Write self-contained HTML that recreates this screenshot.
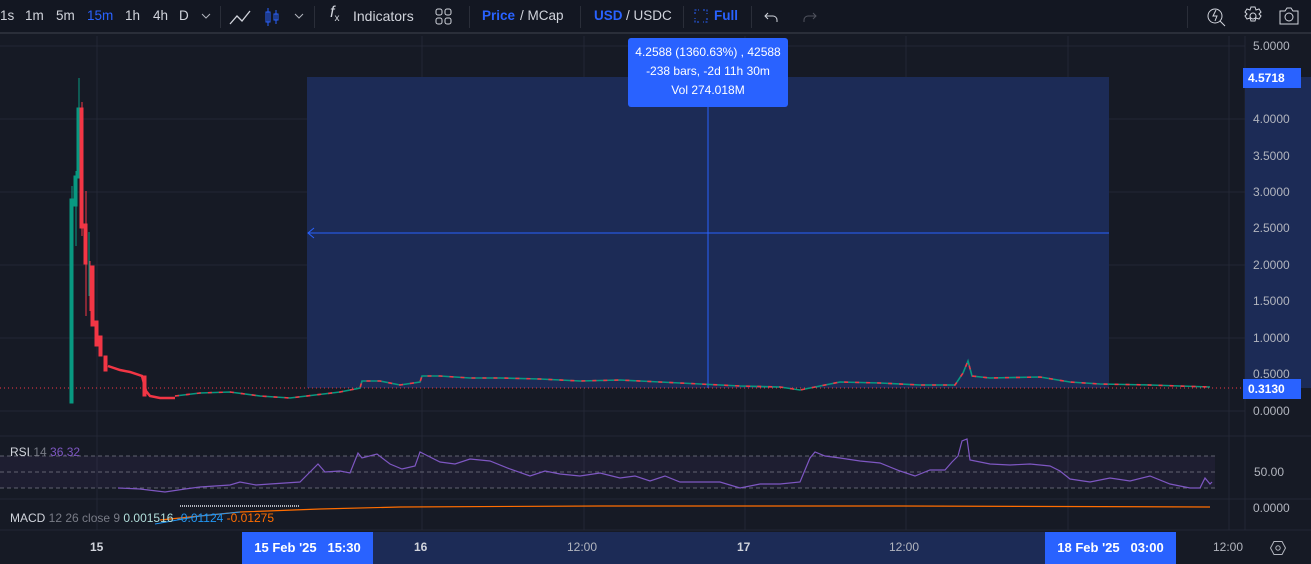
<!DOCTYPE html>
<html><head><meta charset="utf-8"><style>
*{margin:0;padding:0;box-sizing:border-box}
body{width:1311px;height:564px;background:#161a25;overflow:hidden;font-family:"Liberation Sans",sans-serif;color:#d1d4dc;position:relative}
.tb{position:absolute;left:0;top:0;width:1311px;height:34px;background:#131722;border-bottom:2px solid #2a2e39;font-size:13.5px}
.tb span{position:absolute;top:8px}
.sep{position:absolute;top:6px;width:1px;height:22px;background:#2a2e39}
.ax{position:absolute;font-size:12px;color:#b2b5be}
</style></head><body>
<div class="tb">
<span style="left:0">1s</span><span style="left:25px">1m</span><span style="left:56px">5m</span><span style="left:87px;color:#2962ff">15m</span><span style="left:125px">1h</span><span style="left:153px">4h</span><span style="left:179px">D</span>
<svg style="position:absolute;left:200px;top:10px" width="12" height="12"><path d="M2 4l4 4 4-4" stroke="#b2b5be" fill="none"/></svg>
<div class="sep" style="left:220px"></div>
<svg style="position:absolute;left:228px;top:7px" width="24" height="20"><path d="M2 17l7-8 5 5 8-10" stroke="#d1d4dc" fill="none" stroke-width="1.3"/></svg>
<svg style="position:absolute;left:263px;top:5px" width="18" height="24"><path d="M5 3v18M13 5v14" stroke="#2962ff"/><rect x="3" y="7" width="4" height="10" stroke="#2962ff" fill="none"/><rect x="11" y="9" width="4" height="6" stroke="#2962ff" fill="none"/></svg>
<svg style="position:absolute;left:293px;top:10px" width="12" height="12"><path d="M2 4l4 4 4-4" stroke="#b2b5be" fill="none"/></svg>
<div class="sep" style="left:314px"></div>
<span style="left:330px;top:4px;font-style:italic;font-size:16px">f<sub style="font-size:10px;font-style:normal">x</sub></span>
<span style="left:353px;font-size:14px">Indicators</span>
<svg style="position:absolute;left:435px;top:8px" width="18" height="18"><g stroke="#d1d4dc" fill="none"><rect x="1" y="1" width="6" height="6" rx="2"/><rect x="10" y="1" width="6" height="6" rx="2"/><rect x="1" y="10" width="6" height="6" rx="2"/><rect x="10" y="10" width="6" height="6" rx="2"/></g></svg>
<div class="sep" style="left:469px"></div>
<span style="left:482px;color:#2962ff;font-weight:bold">Price</span><span style="left:520px">/ MCap</span>
<div class="sep" style="left:580px"></div>
<span style="left:594px;color:#2962ff;font-weight:bold">USD</span><span style="left:626px">/ USDC</span>
<div class="sep" style="left:683px"></div>
<svg style="position:absolute;left:694px;top:9px" width="14" height="14"><path d="M1 5V1h4M9 1h4v4M13 9v4H9M5 13H1V9" stroke="#2962ff" fill="none" stroke-dasharray="2 1.5"/></svg>
<span style="left:714px;color:#2962ff;font-weight:bold">Full</span>
<div class="sep" style="left:751px"></div>
<svg style="position:absolute;left:763px;top:8px" width="18" height="18"><path d="M5 5l-3 3 3 3M2 8h8a4 4 0 0 1 4 4v2" stroke="#d1d4dc" fill="none"/></svg>
<svg style="position:absolute;left:800px;top:8px" width="18" height="18"><path d="M13 5l3 3-3 3M16 8H8a4 4 0 0 0-4 4v2" stroke="#50535e" fill="none"/></svg>
<div class="sep" style="left:1187px"></div>
<svg style="position:absolute;left:1205px;top:4px" width="22" height="24"><circle cx="10" cy="12" r="7" stroke="#d1d4dc" fill="none"/><path d="M15 17l5 5M11 6l-3 6h4l-2 5" stroke="#d1d4dc" fill="none"/></svg>
<svg style="position:absolute;left:1242px;top:5px" width="22" height="22"><circle cx="11" cy="11" r="3" stroke="#d1d4dc" fill="none"/><path d="M9 2h4l1 3 3-1 2 3-2 2 2 2-2 3-3-1-1 3H9l-1-3-3 1-2-3 2-2-2-2 2-3 3 1z" stroke="#d1d4dc" fill="none"/></svg>
<svg style="position:absolute;left:1278px;top:5px" width="22" height="22"><path d="M2 6h5l2-3h4l2 3h5v13H2z" stroke="#d1d4dc" fill="none"/><circle cx="11" cy="12" r="4" stroke="#d1d4dc" fill="none"/></svg>
</div>

<svg style="position:absolute;left:0;top:36px" width="1311" height="528">
<g stroke="#232735" stroke-width="1">
<path d="M97 0V494M422 0V494M584 0V494M745 0V494M906 0V494M1068 0V494M1229 0V494"/>
<path d="M0 10H1245M0 83H1245M0 156H1245M0 229H1245M0 302H1245M0 375H1245"/>
<path d="M0 400H1311M0 463H1311M1245 0V494M0 494H1311"/>
</g>
<rect x="307" y="41" width="802" height="311" fill="#1c2b56" />
<rect x="1245" y="41" width="66" height="311" fill="#1c2b56"/>
<path d="M1109 197H308M314 192l-6 5 6 5" stroke="#2962ff" fill="none"/>
<path d="M708 71V352" stroke="#2962ff"/>
<path d="M0 352H1245" stroke="#f23645" stroke-dasharray="1 3" stroke-width="1"/>
<g fill="#089981" stroke="#089981">
<rect x="70" y="163" width="3" height="204"/><rect x="74" y="140" width="3" height="30"/><rect x="77" y="72" width="3" height="70"/>
<path d="M72 150V185M76 135V210M79 42V80M89 196V260" fill="none"/>
</g>
<g fill="#f23645" stroke="#f23645">
<rect x="80" y="72" width="3" height="120"/><rect x="84" y="188" width="3" height="40"/><rect x="91" y="230" width="3" height="60"/><rect x="95" y="285" width="3" height="25"/><rect x="99" y="300" width="3" height="20"/><rect x="104" y="320" width="3" height="15"/>
<path d="M82 66V200M86 155V280M90 225V275" fill="none"/>
<rect x="143" y="340" width="3" height="20"/>
</g>
<polyline fill="none" stroke="#f23645" stroke-width="2.5" points="108,330 120,334 130,336 142,340 146,355 150,360 160,362 175,362"/>
<polyline fill="none" stroke="#089981" stroke-width="1.6" points="175,360 200,357 230,356 260,360 290,362 315,359 340,356 360,352 362,345 380,345 400,349 420,346 422,340 440,340 470,342 500,342 540,343 580,345 620,344 660,346 700,348 740,350 780,351 800,354 820,350 840,346 880,347 920,349 955,349 963,337 968,325 972,340 990,342 1040,341 1070,346 1100,348 1150,349 1210,351"/>
<polyline fill="none" stroke="#f23645" stroke-width="1.6" stroke-dasharray="4 7" points="175,360 200,357 230,356 260,360 290,362 315,359 340,356 360,352 362,345 380,345 400,349 420,346 422,340 440,340 470,342 500,342 540,343 580,345 620,344 660,346 700,348 740,350 780,351 800,354 820,350 840,346 880,347 920,349 955,349 963,337 968,325 972,340 990,342 1040,341 1070,346 1100,348 1150,349 1210,351"/>
<rect x="0" y="420" width="1215" height="32" fill="#7e57c2" opacity="0.08"/>
<path d="M0 420H1215M0 436H1215M0 452H1215" stroke="#787b86" stroke-dasharray="4 3" stroke-width="0.8"/>
<polyline fill="none" stroke="#7e57c2" stroke-width="1.2" points="118,452 140,453 165,456 185,453 200,451 230,449 240,446 256,449 270,448 300,446 310,436 318,428 325,436 340,435 350,437 358,417 362,422 377,418 390,428 402,433 415,430 420,416 428,420 440,426 455,428 470,423 490,425 510,433 530,440 545,435 560,438 580,440 600,437 620,442 635,440 650,445 665,440 680,446 700,446 720,446 740,452 760,448 780,448 800,446 810,422 815,416 825,420 840,422 860,425 880,427 900,435 915,440 930,434 945,434 952,426 958,420 962,405 967,403 970,424 990,428 1010,429 1030,428 1050,430 1060,435 1070,443 1090,446 1110,442 1130,445 1150,440 1170,448 1190,452 1200,452 1205,442 1210,448 1212,446"/>
<path d="M160 484L240 476 320 473 400 471 600 470 900 470 1210 471" stroke="#ff6d00" fill="none" stroke-width="1.2"/>
<path d="M155 488L200 480 240 476" stroke="#2196f3" fill="none" stroke-width="1"/>
<path d="M180 470H300" stroke="#b2b5be" stroke-dasharray="1 1" stroke-width="2"/>
<rect x="307" y="496" width="802" height="32" fill="#1c2b56"/>
</svg>

<div style="position:absolute;left:628px;top:38px;width:160px;height:69px;background:#2962ff;border-radius:3px;color:#fff;font-size:12px;text-align:center;line-height:19px;padding-top:5px">4.2588 (1360.63%) , 42588<br>-238 bars, -2d 11h 30m<br>Vol 274.018M</div>

<div class="ax" style="left:1253px;top:39px">5.0000</div>
<div class="ax" style="left:1253px;top:112px">4.0000</div>
<div class="ax" style="left:1253px;top:149px">3.5000</div>
<div class="ax" style="left:1253px;top:185px">3.0000</div>
<div class="ax" style="left:1253px;top:221px">2.5000</div>
<div class="ax" style="left:1253px;top:258px">2.0000</div>
<div class="ax" style="left:1253px;top:294px">1.5000</div>
<div class="ax" style="left:1253px;top:331px">1.0000</div>
<div class="ax" style="left:1253px;top:367px">0.5000</div>
<div class="ax" style="left:1253px;top:404px">0.0000</div>
<div class="ax" style="left:1243px;top:68px;width:58px;height:20px;background:#2962ff;color:#fff;font-weight:bold;line-height:20px;padding-left:5px">4.5718</div>
<div class="ax" style="left:1243px;top:379px;width:58px;height:20px;background:#2962ff;color:#fff;font-weight:bold;line-height:20px;padding-left:5px">0.3130</div>
<div class="ax" style="left:1254px;top:465px">50.00</div>
<div class="ax" style="left:1253px;top:501px">0.0000</div>

<div style="position:absolute;left:10px;top:445px;font-size:12px">RSI <span style="color:#787b86">14</span> <span style="color:#7e57c2">36.32</span></div>
<div style="position:absolute;left:10px;top:511px;font-size:12px">MACD <span style="color:#787b86">12 26 close 9</span> <span style="color:#b2dfdb">0.001516</span> <span style="color:#2196f3">-0.01124</span> <span style="color:#ff6d00">-0.01275</span></div>

<div class="ax" style="left:90px;top:540px;font-weight:bold;color:#d1d4dc">15</div>
<div style="position:absolute;left:242px;top:532px;width:131px;height:32px;background:#2962ff;color:#fff;font-size:13px;line-height:32px;text-align:center;font-weight:bold">15 Feb '25&nbsp;&nbsp; 15:30</div>
<div class="ax" style="left:414px;top:540px;font-weight:bold;color:#d1d4dc">16</div>
<div class="ax" style="left:567px;top:540px">12:00</div>
<div class="ax" style="left:737px;top:540px;font-weight:bold;color:#d1d4dc">17</div>
<div class="ax" style="left:889px;top:540px">12:00</div>
<div style="position:absolute;left:1045px;top:532px;width:131px;height:32px;background:#2962ff;color:#fff;font-size:13px;line-height:32px;text-align:center;font-weight:bold">18 Feb '25&nbsp;&nbsp; 03:00</div>
<div class="ax" style="left:1213px;top:540px;width:32px;overflow:hidden;white-space:nowrap">12:00</div>
<svg style="position:absolute;left:1270px;top:540px" width="16" height="16"><path d="M4 1.5h8l3.5 6.5-3.5 6.5H4L.5 8z" stroke="#b2b5be" fill="none"/><circle cx="8" cy="8" r="2.2" stroke="#b2b5be" fill="none"/></svg>
</body></html>
